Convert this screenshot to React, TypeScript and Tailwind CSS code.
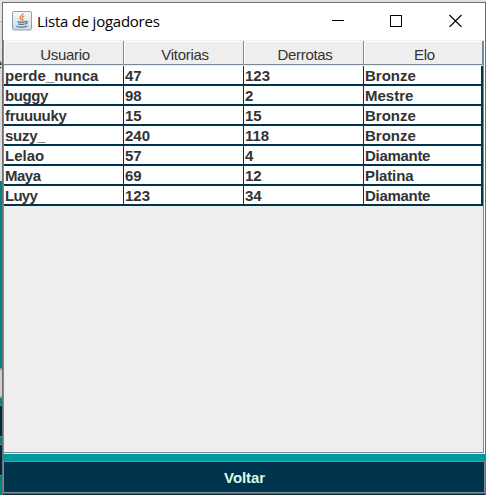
import React from "react";

const columns = ["Usuario", "Vitorias", "Derrotas", "Elo"];
const players = [
  ["perde_nunca", "47", "123", "Bronze"],
  ["buggy", "98", "2", "Mestre"],
  ["fruuuuky", "15", "15", "Bronze"],
  ["suzy_", "240", "118", "Bronze"],
  ["Lelao", "57", "4", "Diamante"],
  ["Maya", "69", "12", "Platina"],
  ["Luyy", "123", "34", "Diamante"],
];

const spacing: Record<string, string> = {
  Diamante: "tracking-[-0.3px]",
  Luyy: "tracking-[-0.75px]",
  Maya: "tracking-[-0.5px]",
  Platina: "tracking-[-0.1px]",
  buggy: "tracking-[-0.4px]",
  suzy_: "tracking-[-0.25px]",
  fruuuuky: "tracking-[-0.35px]",
};

function JavaIcon() {
  return (
    <svg width="20" height="20" viewBox="0 0 20 20" fill="none">
      <defs>
        <linearGradient id="tile" x1="0" y1="0" x2="0" y2="1">
          <stop offset="0" stopColor="#fafbfc" />
          <stop offset="1" stopColor="#ccd7df" />
        </linearGradient>
      </defs>
      <rect x=".5" y=".5" width="19" height="18.5" rx="1.5" fill="url(#tile)" stroke="#8ba2b5" />
      <path d="M10.8 2.2c1 2-3.7 3-2.8 5.2.3.8 1 1.4 1.4 2.2M12.2 5c-2.4 1.2-2.5 2-1.4 3.3.4.6.1 1.2-.4 1.7" stroke="#e8873f" strokeWidth="1.3" />
      <path d="M5.5 10.7c2 .8 6 .7 8 0M6.3 12.8c2 .7 4.5.6 6.3 0M13.5 10.5c2.2-.5 2.5 1.8-.3 2.5M4.3 15.2c2.5 1.4 8.2 1.3 11-.2" stroke="#547794" strokeWidth="1.3" />
    </svg>
  );
}

function TitleBar() {
  return (
    <header className="flex h-[37px] shrink-0 items-center bg-white pl-[9px] text-black">
      <div className="-mt-[2px]">
        <JavaIcon />
      </div>
      <h1 className="-mt-[2px] ml-[5px] w-[280px] whitespace-nowrap font-['Open_Sans','Noto_Sans',sans-serif] text-[15px] leading-5 tracking-[-0.25px]">Lista de jogadores</h1>
      <svg className="-mt-[4px] ml-[12px] shrink-0" width="140" height="14" viewBox="0 0 140 14" fill="none" stroke="#000" shapeRendering="crispEdges">
        <path d="M3 7.5h12" />
        <rect x="61.5" y="2.5" width="11" height="11" />
        <path d="m120.5 2 12 12m0-12-12 12" shapeRendering="auto" strokeWidth="1.1" />
      </svg>
    </header>
  );
}

function PlayerTable() {
  return (
    <div className="h-[165px] w-[479px]">
      <div className="grid h-[25px] grid-cols-[120px_120px_120px_119px] border-b border-[#e8e8fa]">
        {columns.map((c) => (
          <div key={c} className="h-6 border-r border-b border-[#7a8a99]">
            <div className="h-full border-t border-l border-white pl-[2px] text-center text-[15px] leading-[26px] tracking-[-0.3px]">{c}</div>
          </div>
        ))}
      </div>
      {players.map((p) => (
        <div key={p[0]} className="grid h-5 grid-cols-[120px_120px_120px_119px] border-b-2 border-[#00344d] bg-white text-[15px] leading-[19px] font-bold">
          {p.map((v, i) => (
            <div key={i} className={i === 3 ? "h-[18px] border-r-2 border-[#00344d] pl-px" : "h-[18px] border-r border-[#00344d] pl-px"}>
              <span className={spacing[v]}>{v}</span>
            </div>
          ))}
        </div>
      ))}
    </div>
  );
}

function BackgroundEdge() {
  return (
    <div className="h-[493px] w-[2px] shrink-0 overflow-hidden bg-[#008385]">
      <div className="h-[19px] bg-[#e5e5e5]" />
      <div className="h-px bg-[#b7b7b7]" />
      <div className="h-[159px] bg-[#dedede] pt-[32px]">
        <div className="-ml-[6px] text-[15px] leading-5 text-[#333]">e</div>
      </div>
      <div className="h-[187px]" />
      <div className="h-[30px] border-y-2 border-[#9b9b9b] bg-[#d0d0d0]" />
      <div className="h-[7px]" />
      <div className="h-[32px] border-t border-b border-[#708090] bg-[#00263b]" />
      <div className="h-[7px]" />
      <div className="h-[32px] border-y border-[#708090] bg-[#00263b]" />
    </div>
  );
}

export default function App() {
  return (
    <main className="flex h-[495px] w-[486px] flex-col overflow-hidden bg-[#e1e1e1] pt-[2px] font-['Liberation_Sans',Arial,sans-serif] text-[#333]">
      <div className="flex">
        <BackgroundEdge />
        <section className="flex h-[493px] w-[484px] shrink-0 flex-col border-t border-r border-l border-[#707070] bg-[#eee]">
          <TitleBar />
          <div className="flex h-[414px] shrink-0 border-l border-[#7a8a99] pt-px">
            <div className="h-[412px] w-[480px] border-r border-b border-[#7a8a99] bg-[#eee]">
              <PlayerTable />
            </div>
            <div className="h-[413px] w-px bg-white" />
          </div>
          <div className="h-[7px] shrink-0 bg-[#009999]" />
          <button className="h-[32px] shrink-0 border border-[#7a8a99] bg-[#00344d] pl-px text-[15px] leading-[32px] font-bold tracking-[-0.1px] text-[#d8fae9]">Voltar</button>
          <div className="h-px shrink-0 bg-[#008b8e]" />
          <div className="h-px shrink-0 bg-[#10262f]" />
        </section>
      </div>
    </main>
  );
}
